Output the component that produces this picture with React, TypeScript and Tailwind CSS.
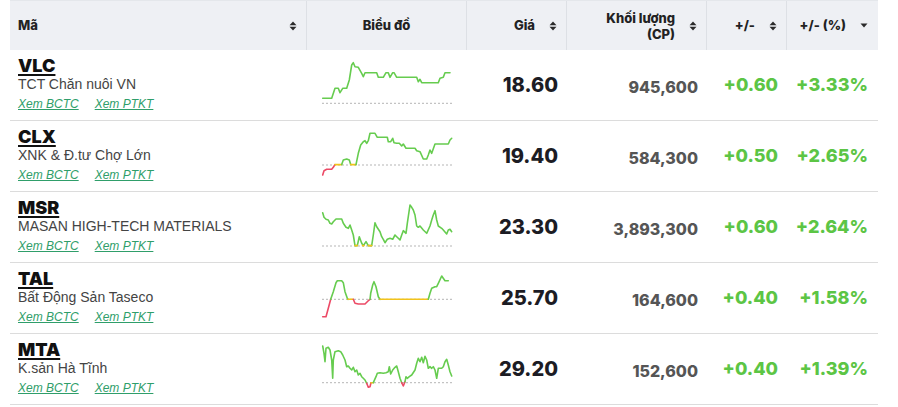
import React from 'react';

const G = '#66cc4f';
const Y = '#f2c31b';
const R = '#ec4a66';

type Seg = { color: string; pts: string };

interface Row {
  ticker: string;
  name: string;
  price: string;
  volume: string;
  change: string;
  pct: string;
  base: number;
  segs: Seg[];
}

const rows: Row[] = [
  {
    ticker: 'VLC',
    name: 'TCT Chăn nuôi VN',
    price: '18.60',
    volume: '945,600',
    change: '+0.60',
    pct: '+3.33%',
    base: 53.3,
    segs: [
      {
        color: G,
        pts: '15.7,48.3 24.7,48.3 28,38.3 31.3,38.3 33,42.7 35.7,38.3 39.7,38.3 42.3,30 44.7,15 46.3,12.7 48,16.7 51.3,17.3 54.7,23.3 56.3,26.7 58,22.7 69.7,22.7 71.3,27.3 76.3,27.3 79,22.7 81.3,22.7 83,27.3 85.7,22.7 87,22.7 89.7,27.3 109.7,27.3 111.3,31.7 113,29.3 114.7,32.7 131.3,32.7 133,28.3 136.3,27.3 138,22.7 143,22.7',
      },
    ],
  },
  {
    ticker: 'CLX',
    name: 'XNK & Đ.tư Chợ Lớn',
    price: '19.40',
    volume: '584,300',
    change: '+0.50',
    pct: '+2.65%',
    base: 44,
    segs: [
      { color: R, pts: '15.7,54 17,49.7 19.7,48.3 24.7,48.3 26.3,46.3 28,43.6' },
      { color: Y, pts: '28,43.6 34.7,43.6' },
      { color: G, pts: '34.7,43.6 36.3,39 39.7,38 42.3,39 43.7,43.6' },
      { color: Y, pts: '43.7,43.6 49,43.6' },
      {
        color: G,
        pts: '49,43.6 51.3,32.3 53.7,24 56.3,20.7 58,19.7 59.7,22.3 61.3,19.7 63,12.3 68,12.3 70.3,16.3 80.3,16.3 81.3,20.7 83.7,20.7 85.7,17.3 87,21.7 89.7,22.3 92.3,22.3 94.7,25 96.3,23 99,27.3 108,27.3 109.7,29.7 113,30.7 116.3,38 119.7,38 121.3,34 123,29 124.7,32.3 128,23 141.3,23 143,19 144.7,17.3',
      },
    ],
  },
  {
    ticker: 'MSR',
    name: 'MASAN HIGH-TECH MATERIALS',
    price: '23.30',
    volume: '3,893,300',
    change: '+0.60',
    pct: '+2.64%',
    base: 54,
    segs: [
      {
        color: G,
        pts: '15.7,20.7 17,25.3 19,27.3 21.3,28 23,31.3 24.7,32 26.3,29.7 29,27 34.7,27 36.3,31.3 39,35.3 41.3,36.3 43,33 44.7,38 46.3,43 48,53.6 50.3,53.6 52.3,44.7 54.7,51.3 56.3,53.6 59,49.7 61.3,53.6 64.7,53.6 66.3,43 68,30.7 69.7,34.7 73,39.7 74.7,44.7 76.3,47.3 78,50.7 80.3,47.3 83,46.3 85.7,47.3 88,43 89.7,44.7 91.3,46.3 93,48 94.7,43 96.3,38.7 99,41.3 100.3,31.3 103,13 104.7,15.3 106.3,18 108,23 109.7,34 111.3,35.3 113,34 116.3,38 119.7,41.3 123,34 124.7,28 126.3,23 128,18.7 129.7,28 131.3,34 134.7,36.3 136.3,38 139.7,42 141.3,38 143,37.3 144.7,39.7',
      },
      { color: Y, pts: '48,53.6 50.3,53.6' },
      { color: Y, pts: '55.5,53.6 57,53.6' },
      { color: Y, pts: '61.3,53.6 64.7,53.6' },
    ],
  },
  {
    ticker: 'TAL',
    name: 'Bất Động Sản Taseco',
    price: '25.70',
    volume: '164,600',
    change: '+0.40',
    pct: '+1.58%',
    base: 36.3,
    segs: [
      { color: R, pts: '15.7,53.7 19,53.7 21.3,45.3 23.7,36.3' },
      { color: G, pts: '23.7,36.3 26.3,28.7 29,19.7 30.3,17.7 34.7,17.7 36.3,19.7 38,28.7 40.3,35.3 41,36.3' },
      { color: Y, pts: '41,36.3 46.3,36.3' },
      { color: R, pts: '46.3,36.3 48,40.3 51.3,41 58,41 61.3,37.7 63,36.3' },
      { color: G, pts: '63,36.3 63.7,30.3 65.7,22 67,18.7 69,23.7 71.3,33.7 73,36.3' },
      { color: Y, pts: '73,36.3 121.3,36.3' },
      { color: G, pts: '121.3,36.3 123,30.3 124.7,25.3 128,23.7 129.7,23.7 131.3,20.3 134.7,13 138,17.7 141.3,17.7' },
    ],
  },
  {
    ticker: 'MTA',
    name: 'K.sản Hà Tĩnh',
    price: '29.20',
    volume: '152,600',
    change: '+0.40',
    pct: '+1.39%',
    base: 48.7,
    segs: [
      {
        color: G,
        pts: '15.7,12 17,19.3 18,27.7 19,14.3 21.3,13.3 23,16 24.7,26 25.7,44.3 26.3,26 28,17.7 31.3,16.7 33.7,17.7 35.7,21 38,26 39.7,32.7 41.3,32 43,34.3 44.7,36 46.3,33.3 48,37.7 49.7,36 51.3,41 53,39.3 54.7,42.7 56.3,44.3 58,46 59.7,49.3',
      },
      { color: R, pts: '59.7,49.3 61.3,53.3 63,52.7 64,48.7' },
      { color: Y, pts: '64,48.7 66.3,48.7' },
      {
        color: G,
        pts: '66.3,48.7 69,42.7 70.3,39.3 73,38.7 76.3,39.3 79,38.7 81.3,37.7 82.3,32.7 83.7,40 85.7,36 88,33.3 89.7,32 91.3,37.7 93,44.3 94.7,48.7',
      },
      { color: R, pts: '94.7,48.7 96.3,52 98,47.7' },
      {
        color: G,
        pts: '98,47.7 99,42.7 100.3,44.3 102.3,42.7 104.7,41 108,36 109.7,29.3 111.3,24.3 113,27.7 114.7,23.3 116.3,28.7 118,22.3 119.7,26 121.3,34.3 123,32.7 124.7,34.3 126.3,32.7 128,36 129.7,44.3 131.3,34.3 134.7,34.3 136.3,32.7 138,27.7 139.7,25.3 141.3,31 143,37.7 144.7,42',
      },
    ],
  },
];

const SortIcon = () => (
  <svg width="8" height="10" viewBox="0 0 8 10" className="shrink-0">
    <polygon points="0.5,4.3 4,0.5 7.5,4.3" fill="#2a2a2a" />
    <polygon points="0.5,5.7 7.5,5.7 4,9.5" fill="#2a2a2a" />
  </svg>
);

const CaretDown = () => (
  <svg width="8" height="5" viewBox="0 0 8 5" className="shrink-0">
    <polygon points="0.5,0.5 7.5,0.5 4,4.5" fill="#2a2a2a" />
  </svg>
);

const Spark = ({ row }: { row: Row }) => (
  <svg width="160" height="70" viewBox="0 0 160 70" className="block">
    <line x1="15" y1={row.base} x2="145" y2={row.base} stroke="#b5b5b5" strokeWidth="1" strokeDasharray="2 2" />
    {row.segs.map((s, i) => (
      <polyline
        key={i}
        points={s.pts}
        fill="none"
        stroke={s.color}
        strokeWidth="1.6"
        strokeLinejoin="round"
        strokeLinecap="round"
      />
    ))}
  </svg>
);

const cols = 'grid grid-cols-[297px_160px_100px_140px_80px_91px]';

export default function App() {
  return (
    <div className="w-[898px] h-[407px] bg-white overflow-hidden font-['Inter',sans-serif]">
      <div className="ml-[10px] w-[868px]">
        {/* header */}
        <div className={`${cols} h-[50px] bg-[#eef0f4] border-t border-[#e4e7eb] text-[13px] font-extrabold text-[#222]`}>
          <div className="flex items-center justify-between pl-2 pr-[9px] border-r border-[#dde0e5]">
            <span>Mã</span>
            <SortIcon />
          </div>
          <div className="flex items-center justify-center border-r border-[#dde0e5]">
            <span>Biểu đồ</span>
          </div>
          <div className="flex items-center justify-end gap-[14px] pr-[9px] border-r border-[#dde0e5]">
            <span>Giá</span>
            <SortIcon />
          </div>
          <div className="flex items-center justify-end gap-[14px] pr-[9px] border-r border-[#dde0e5]">
            <span className="text-right leading-[16px]">
              Khối lượng
              <br />
              (CP)
            </span>
            <SortIcon />
          </div>
          <div className="flex items-center justify-end gap-[14px] pr-[9px] border-r border-[#dde0e5]">
            <span>+/-</span>
            <SortIcon />
          </div>
          <div className="flex items-center justify-end gap-[14px] pr-[10px]">
            <span>+/- (%)</span>
            <CaretDown />
          </div>
        </div>

        {/* rows */}
        {rows.map(row => (
          <div key={row.ticker} className={`${cols} h-[71px] border-b border-[#dcdcdc]`}>
            <div className="pl-2 pt-[7px]">
              <div className="text-[18px] leading-[18px] font-black text-[#111] underline underline-offset-[2px] decoration-[1.5px]">
                {row.ticker}
              </div>
              <div className="font-['Liberation_Sans',Arial,sans-serif] text-[14px] leading-[16px] text-[#444] mt-[1px]">
                {row.name}
              </div>
              <div className="font-['Liberation_Sans',Arial,sans-serif] flex gap-4 mt-[4px] text-[12px] leading-[16px] italic text-[#2f9e6a]">
                <a className="underline">Xem BCTC</a>
                <a className="underline">Xem PTKT</a>
              </div>
            </div>
            <div>
              <Spark row={row} />
            </div>
            <div className="flex items-center justify-end pr-[9px] text-[20px] leading-[24px] font-extrabold text-[#1c1c24]">
              {row.price}
            </div>
            <div className="flex items-center justify-end pr-[9px] pt-[4px] text-[16px] leading-[20px] font-extrabold text-[#555]">
              {row.volume}
            </div>
            <div className="flex items-center justify-end pr-[9px] text-[18px] leading-[22px] font-extrabold text-[#5cc545]">
              {row.change}
            </div>
            <div className="flex items-center justify-end pr-[10px] text-[18px] leading-[22px] font-extrabold text-[#5cc545]">
              {row.pct}
            </div>
          </div>
        ))}
      </div>
    </div>
  );
}
